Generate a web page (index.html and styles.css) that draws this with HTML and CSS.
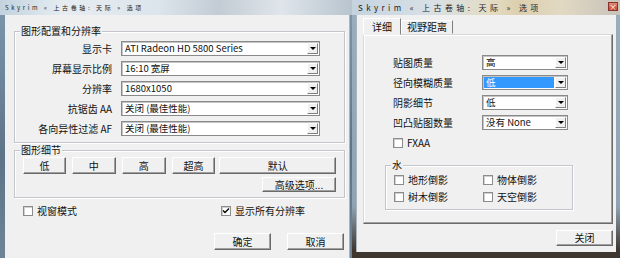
FILE: index.html
```html
<!DOCTYPE html>
<html lang="zh-CN">

<head>
    <meta charset="UTF-8">
    <meta name="viewport" content="width=device-width, initial-scale=1.0">
    <title>Skyrim 选项</title>

    <link rel="stylesheet" href="styles.css">
</head>

<body>
    <div class="desk">
        <!-- Main launcher options window -->
        <div class="win win-main">
            <div class="titlebar">Skyrim « 上古卷轴: 天际 » 选项</div>
            <div class="win-body">
                <div class="group group-display">
                    <span class="group-title">图形配置和分辨率</span>
                    <div class="form-grid">
                        <span class="form-label">显示卡</span>
                        <div class="combo"><span class="combo-text">ATI Radeon HD 5800 Series</span><i class="combo-btn"></i></div>
                        <span class="form-label">屏幕显示比例</span>
                        <div class="combo"><span class="combo-text">16:10 宽屏</span><i class="combo-btn"></i></div>
                        <span class="form-label">分辨率</span>
                        <div class="combo"><span class="combo-text">1680x1050</span><i class="combo-btn"></i></div>
                        <span class="form-label">抗锯齿 AA</span>
                        <div class="combo"><span class="combo-text">关闭 (最佳性能)</span><i class="combo-btn"></i></div>
                        <span class="form-label">各向异性过滤 AF</span>
                        <div class="combo"><span class="combo-text">关闭 (最佳性能)</span><i class="combo-btn"></i></div>
                    </div>
                </div>

                <div class="group group-detail">
                    <span class="group-title">图形细节</span>
                    <div class="preset-row">
                        <button class="btn btn-low">低</button>
                        <button class="btn">中</button>
                        <button class="btn">高</button>
                        <button class="btn">超高</button>
                        <button class="btn btn-default">默认</button>
                    </div>
                    <div class="adv-row">
                        <button class="btn btn-adv">高级选项...</button>
                    </div>
                </div>

                <div class="check-row">
                    <label class="check"><i class="box"></i>视窗模式</label>
                    <label class="check"><i class="box checked"><svg viewBox="0 0 8 8" width="8" height="8"><path d="M1 3.5 L3 5.5 L7 1.5" fill="none" stroke="#000" stroke-width="1.4"/></svg></i>显示所有分辨率</label>
                </div>

                <div class="action-row">
                    <button class="btn btn-action">确定</button>
                    <button class="btn btn-action">取消</button>
                </div>
            </div>
        </div>

        <!-- Advanced options window -->
        <div class="win win-adv">
            <div class="titlebar">Skyrim « 上古卷轴: 天际 » 选项<span class="close-btn">×</span></div>
            <div class="win-body">
                <div class="tabs">
                    <span class="tab active">详细</span>
                    <span class="tab">视野距离</span>
                </div>
                <div class="tab-panel">
                    <div class="opt-grid">
                        <span>贴图质量</span>
                        <div class="combo"><span class="combo-text">高</span><i class="combo-btn"></i></div>
                        <span>径向模糊质量</span>
                        <div class="combo"><span class="combo-text selected">低</span><i class="combo-btn"></i></div>
                        <span>阴影细节</span>
                        <div class="combo"><span class="combo-text">低</span><i class="combo-btn"></i></div>
                        <span>凹凸贴图数量</span>
                        <div class="combo"><span class="combo-text">没有 None</span><i class="combo-btn"></i></div>
                    </div>
                    <label class="check check-fxaa"><i class="box"></i>FXAA</label>

                    <div class="group group-water">
                        <span class="group-title">水</span>
                        <div class="water-grid">
                            <label class="check"><i class="box"></i>地形倒影</label>
                            <label class="check"><i class="box"></i>物体倒影</label>
                            <label class="check"><i class="box"></i>树木倒影</label>
                            <label class="check"><i class="box"></i>天空倒影</label>
                        </div>
                    </div>
                </div>
                <div class="footer">
                    <button class="btn btn-close">关闭</button>
                </div>
            </div>
        </div>
    </div>
</body>

</html>
```

FILE: styles.css
```css
* {
    box-sizing: border-box;
}

body {
    margin: 0;
    width: 620px;
    height: 258px;
    overflow: hidden;
    font-family: "Noto Sans CJK SC", "Liberation Sans", sans-serif;
    font-size: 10px;
    line-height: 12px;
    color: #111;
    background: #3f372f;
}

.desk {
    display: flex;
    height: 258px;
}

.win {
    display: flex;
    flex-direction: column;
}

.titlebar {
    height: 15px;
    padding-left: 5px;
    display: flex;
    align-items: center;
    font-size: 6px;
    letter-spacing: 2.6px;
    color: #222;
    white-space: nowrap;
}

.win-body {
    background: #f0f0f0;
    flex: 1;
}

/* left window */
.win-main {
    width: 352px;
    background: linear-gradient(to bottom, #7d98ae, #5c7488 60%, #6e8496);
}

.win-main .titlebar {
    background: linear-gradient(to right, #c2d2de, #e6edf2 18%, #dce5ec 45%, #c3ccd4 62%, #dfe5ea 80%, #b8c4ce);
}

.win-main .win-body {
    margin: 0 2px 0 5px;
    padding: 16px 4px 0 9px;
    border-right: 1px solid #a9b4bd;
}

.group {
    position: relative;
    border: 1px solid #c2c6ca;
    box-shadow: inset 1px 1px 0 #fff, 1px 1px 0 #fff;
}

.group-title {
    position: absolute;
    top: -7px;
    left: 5px;
    padding: 0 1px;
    background: #f0f0f0;
    line-height: 12px;
}

.form-grid {
    display: grid;
    grid-template-columns: 97px 199px;
    grid-auto-rows: 15px;
    column-gap: 9px;
    row-gap: 5px;
    padding: 9px 0 6px 0;
}

.form-label {
    text-align: right;
    align-self: center;
}

.combo {
    display: flex;
    align-items: stretch;
    background: #fff;
    border: 1px solid #8a8a8a;
    box-shadow: inset 1px 1px 0 #c4c4c4;
    padding: 1px;
}

.combo-text {
    flex: 1;
    display: flex;
    align-items: center;
    padding-left: 2px;
    font-size: 9.5px;
    line-height: 11px;
    white-space: nowrap;
}

.combo-text.selected {
    background: #3399ff;
    color: #fff;
    margin-right: 1px;
}

.combo-btn {
    width: 11px;
    background: #f0f0f0;
    border: 1px solid;
    border-color: #fff #808080 #808080 #fff;
    display: flex;
    align-items: center;
    justify-content: center;
}

.combo-btn::after {
    content: "";
    border-left: 3px solid transparent;
    border-right: 3px solid transparent;
    border-top: 3px solid #000;
}

.group-detail {
    margin-top: 7px;
    padding: 6px 8px 5px 8px;
}

.preset-row {
    display: flex;
    gap: 6px;
}

.btn {
    height: 17px;
    padding: 0;
    font-family: inherit;
    font-size: 10px;
    line-height: 12px;
    color: #111;
    background: #f0f0f0;
    border: 1px solid;
    border-color: #fff #696969 #696969 #fff;
    box-shadow: inset -1px -1px 0 #a0a0a0;
}

.preset-row .btn {
    width: 44px;
}

.preset-row .btn-low {
    width: 43px;
}

.preset-row .btn-default {
    width: 117px;
    margin-left: -2px;
}

.adv-row {
    display: flex;
    justify-content: flex-end;
    margin-top: 3px;
}

.btn-adv {
    width: 74px;
    height: 15px;
}

.check-row {
    display: grid;
    grid-template-columns: 198px auto;
    margin-top: 8px;
    padding-left: 9px;
}

.check {
    display: flex;
    align-items: center;
    gap: 4px;
    height: 10px;
    white-space: nowrap;
}

.box {
    width: 10px;
    height: 10px;
    background: #fff;
    border: 1px solid #8c8c8c;
    box-shadow: inset 1px 1px 0 #d0d0d0;
    display: flex;
    align-items: center;
    justify-content: center;
}

.action-row {
    display: flex;
    justify-content: flex-end;
    gap: 16px;
    margin-top: 17px;
    padding-right: 1px;
}

.btn-action {
    width: 57px;
}

/* right window */
.win-adv {
    flex: 1;
    background: linear-gradient(to bottom, #9aaebf, #8ea3b5 80%, #3f372f 97%);
}

.win-adv .titlebar {
    position: relative;
    padding-left: 6px;
    font-size: 8px;
    letter-spacing: 3.4px;
    background: linear-gradient(to right, #c5d3df, #d8e0e6 30%, #e3dcc4 52%, #dccfae 62%, #e2d9c3 78%, #c7c3ba);
}

.close-btn {
    position: absolute;
    top: 2px;
    right: 2px;
    width: 10px;
    height: 9px;
    background: linear-gradient(#e08a78, #c2412c);
    border: 1px solid #8a3326;
    color: #fff;
    font-size: 8px;
    line-height: 7px;
    letter-spacing: 0;
    text-align: center;
}

.win-adv .win-body {
    flex: none;
    height: 237px;
    margin: 0 4px;
    padding: 3px 3px 0 6px;
    border-left: 1px solid #a9b4bd;
}

.tabs {
    display: flex;
    align-items: flex-end;
    height: 16px;
}

.tab {
    height: 14px;
    padding: 0 5px;
    border: 1px solid;
    border-color: #fff #808080 transparent #fff;
    display: flex;
    align-items: center;
    justify-content: center;
}

.tab.active {
    height: 17px;
    width: 38px;
    margin-bottom: -1px;
    background: #f0f0f0;
    position: relative;
    z-index: 1;
}

.tab-panel {
    height: 190px;
    border: 1px solid;
    border-color: #d8d8d8 #696969 #696969 #d8d8d8;
    box-shadow: inset -1px -1px 0 #a0a0a0, inset 1px 1px 0 #fff;
    padding: 20px 0 0 29px;
}

.opt-grid {
    display: grid;
    grid-template-columns: 80px 86px;
    grid-auto-rows: 15px;
    column-gap: 9px;
    row-gap: 5px;
}

.opt-grid > span {
    align-self: center;
}

.check-fxaa {
    margin-top: 8px;
}

.group-water {
    width: 188px;
    margin: 17px 0 0 -8px;
    padding: 9px 0 7px 8px;
}

.water-grid {
    display: grid;
    grid-template-columns: 89px auto;
    row-gap: 7px;
}

.footer {
    display: flex;
    justify-content: flex-end;
    margin-top: 6px;
}

.btn-close {
    width: 57px;
    height: 16px;
}
```
